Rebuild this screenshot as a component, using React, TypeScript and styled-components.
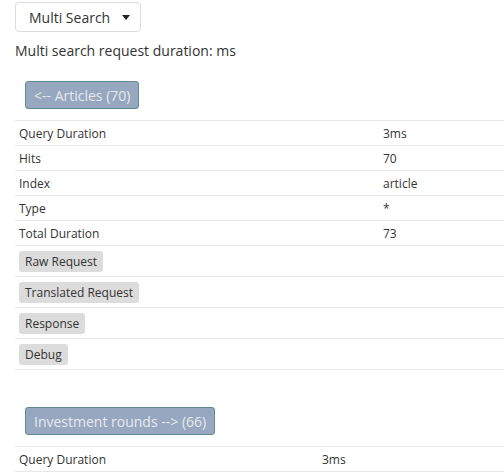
import React from 'react';
import styled, {createGlobalStyle} from 'styled-components';

interface Stat {
  label: string;
  value: string;
}

interface Section {
  title: string;
  labelWidth: number;
  stats: Stat[];
  actions: string[];
}

const sections: Section[] = [
  {
    title: '<-- Articles (70)',
    labelWidth: 364,
    stats: [
      {label: 'Query Duration', value: '3ms'},
      {label: 'Hits', value: '70'},
      {label: 'Index', value: 'article'},
      {label: 'Type', value: '*'},
      {label: 'Total Duration', value: '73'},
    ],
    actions: ['Raw Request', 'Translated Request', 'Response', 'Debug'],
  },
  {
    title: 'Investment rounds --> (66)',
    labelWidth: 303,
    stats: [{label: 'Query Duration', value: '3ms'}],
    actions: [],
  },
];

const App = () => {
  return (
    <Page>
      <GlobalStyle />
      <Dropdown>
        Multi Search
        <Caret />
      </Dropdown>
      <Duration>Multi search request duration: ms</Duration>
      {sections.map((section) => (
        <Block key={section.title}>
          <ToggleButton>{section.title}</ToggleButton>
          <StatsTable>
            <tbody>
              {section.stats.map((stat) => (
                <tr key={stat.label}>
                  <LabelCell $width={section.labelWidth}>{stat.label}</LabelCell>
                  <Cell>{stat.value}</Cell>
                </tr>
              ))}
              {section.actions.map((action) => (
                <tr key={action}>
                  <ActionCell colSpan={2}>
                    <ActionButton>{action}</ActionButton>
                  </ActionCell>
                </tr>
              ))}
            </tbody>
          </StatsTable>
        </Block>
      ))}
    </Page>
  );
};

const GlobalStyle = createGlobalStyle`
  body {
    margin: 0;
    background: #fff;
    font-family: "Open Sans", "DejaVu Sans", sans-serif;
    color: #333;
    overflow: hidden;
  }
`;

const Page = styled.div`
  padding: 2px 0 0 15px;
`;

const Dropdown = styled.button`
  display: flex;
  align-items: center;
  width: 126px;
  height: 30px;
  padding: 0 0 0 13px;
  background: #fff;
  border: 1px solid #dcdcdc;
  border-radius: 4px;
  font-family: inherit;
  font-size: 14px;
  color: #333;
`;

const Caret = styled.span`
  margin-left: 12px;
  width: 0;
  height: 0;
  border-left: 4px solid transparent;
  border-right: 4px solid transparent;
  border-top: 5px solid #222;
`;

const Duration = styled.div`
  margin-top: 9px;
  font-size: 14px;
  line-height: 20px;
`;

const Block = styled.div`
  margin-top: 20px;
  &:last-child {
    margin-top: 37px;
  }
`;

const ToggleButton = styled.button`
  margin-left: 10px;
  height: 28px;
  padding: 0 8px;
  background: #96a7bf;
  border: 1px solid #5f8b90;
  border-radius: 3px;
  color: #e6eaf0;
  font-family: inherit;
  font-size: 14px;
`;

const StatsTable = styled.table`
  margin-top: 11px;
  width: 100%;
  border-collapse: collapse;
  font-size: 12px;
`;

const Cell = styled.td`
  height: 24px;
  padding: 0 4px;
  border-top: 1px solid #e8e8e8;
  border-bottom: 1px solid #e8e8e8;
  vertical-align: middle;
`;

const LabelCell = styled(Cell)<{$width: number}>`
  width: ${(p) => p.$width - 8}px;
`;

const ActionCell = styled(Cell)`
  height: 30px;
`;

const ActionButton = styled.span`
  display: inline-block;
  padding: 0 6px;
  line-height: 21px;
  background: #dcdcdc;
  border-radius: 3px;
  color: #333;
`;

export default App;
